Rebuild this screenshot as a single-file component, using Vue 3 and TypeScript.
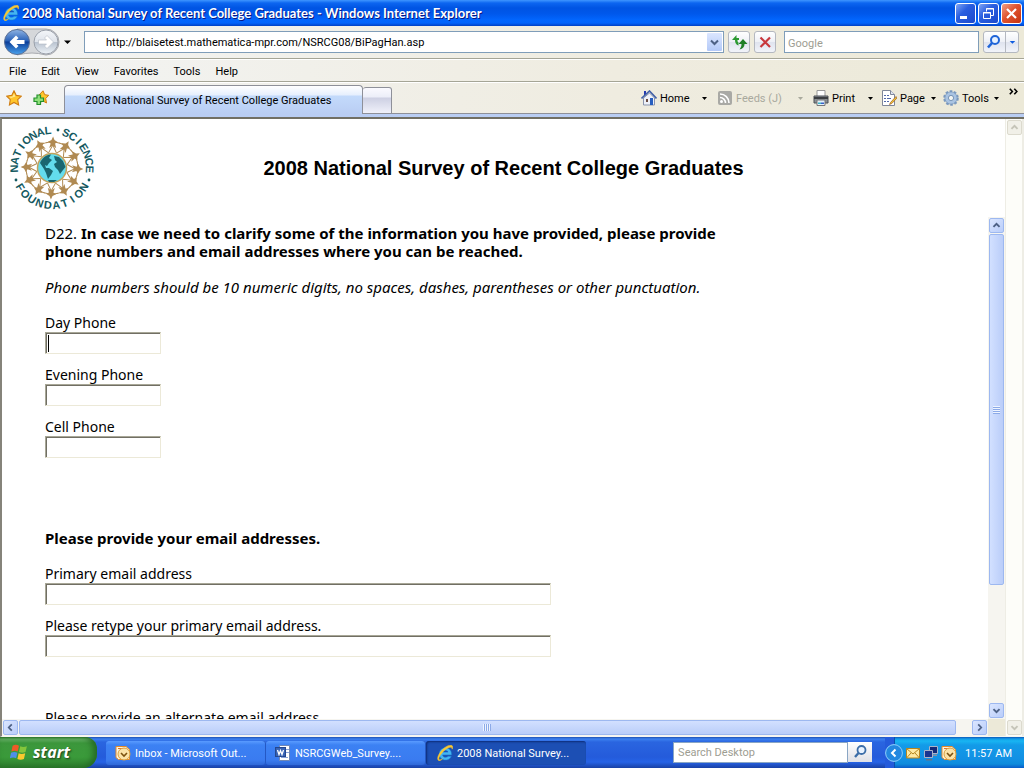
<script setup lang="ts">
import { ref } from 'vue'

const pageTitle = '2008 National Survey of Recent College Graduates'
const url = ref('http://blaisetest.mathematica-mpr.com/NSRCG08/BiPagHan.asp')
const search = ref('')
const desktopSearch = ref('')

const menus = ['File', 'Edit', 'View', 'Favorites', 'Tools', 'Help']

interface Command { id: string; label: string; disabled?: boolean }
const commands: Command[] = [
  { id: 'home', label: 'Home' },
  { id: 'feeds', label: 'Feeds (J)', disabled: true },
  { id: 'print', label: 'Print' },
  { id: 'page', label: 'Page' },
  { id: 'tools', label: 'Tools' },
]

interface Field { id: string; label: string; value: string }
const phones = ref<Field[]>([
  { id: 'day', label: 'Day Phone', value: '' },
  { id: 'evening', label: 'Evening Phone', value: '' },
  { id: 'cell', label: 'Cell Phone', value: '' },
])
const emails = ref<Field[]>([
  { id: 'primary', label: 'Primary email address', value: '' },
  { id: 'retype', label: 'Please retype your primary email address.', value: '' },
])

const tasks = [
  { id: 'outlook', label: 'Inbox - Microsoft Out...' },
  { id: 'word', label: 'NSRCGWeb_Survey....' },
  { id: 'ie', label: '2008 National Survey...' },
]

// Seal lettering: each letter sits on a ring at its own angle (degrees from the top).
interface Glyph { ch: string; angle: number }
function spread(word: string, from: number, to: number): Glyph[] {
  const step = (to - from) / (word.length - 1)
  return word.split('').map((ch, i) => ({ ch, angle: from + i * step }))
}
const upper: Glyph[] = [...spread('NATIONAL', -91, -6), ...spread('SCIENCE', 22, 92)]
const lower: Glyph[] = spread('FOUNDATION', 59, -59)
const figures = Array.from({ length: 12 }, (_, i) => i * 30 + 2)
</script>

<template>
  <div class="desktop">
    <header class="titlebar">
      <svg class="ico" viewBox="0 0 16 16"><use href="#ie-logo" /></svg>
      <span class="title">{{ pageTitle }} - Windows Internet Explorer</span>
      <button class="win" aria-label="Minimize"><svg viewBox="0 0 19 19"><rect x="4" y="12" width="7" height="3" fill="#fff" /></svg></button>
      <button class="win" aria-label="Restore"><svg viewBox="0 0 19 19" fill="none" stroke="#fff"><path d="M7.500 7.500V4.500H14.500V11.500H11.500M7 5H15" /><path d="M4.500 8.500H11.500V14.500H4.500ZM4 9H12" /></svg></button>
      <button class="win close" aria-label="Close"><svg viewBox="0 0 19 19"><path d="M5 5L14 14M14 5L5 14" stroke="#fff" stroke-width="2.200" /></svg></button>
    </header>

    <div class="address">
      <div class="nav">
        <svg width="76" height="30" viewBox="0 0 76 30">
          <defs>
            <linearGradient id="back" x1="0" y1="0" x2="0" y2="1"><stop offset="0" stop-color="#8fb4e4" /><stop offset=".45" stop-color="#2a62b8" /><stop offset=".5" stop-color="#0b3d98" /><stop offset="1" stop-color="#4aa3ee" /></linearGradient>
            <linearGradient id="fwd" x1="0" y1="0" x2="0" y2="1"><stop offset="0" stop-color="#f4f6f9" /><stop offset=".48" stop-color="#dfe4eb" /><stop offset=".52" stop-color="#b9c3d0" /><stop offset="1" stop-color="#eef3f8" /></linearGradient>
          </defs>
          <path d="M17 2H46A13 13 0 0 1 46 28Q38 26 32 26T17 28Z" fill="#d5d7da" stroke="#a9abb0" />
          <circle cx="17" cy="15" r="12.500" fill="url(#back)" stroke="#5a6f94" />
          <circle cx="46" cy="15" r="12" fill="url(#fwd)" stroke="#9aa0aa" />
          <path d="M9.500 15L16 8.500L18.500 11L16.500 13H24.500V17H16.500L18.500 19L16 21.500Z" fill="#fff" />
          <path d="M53.500 15L47 8.500L44.500 11L46.500 13H38.500V17H46.500L44.500 19L47 21.500Z" fill="#fff" stroke="#b4bbc5" stroke-width=".6" />
          <path d="M64 13.500H71L67.500 17Z" fill="#000" />
        </svg>
        <button class="hit" aria-label="Back"></button>
        <button class="hit" aria-label="Forward"></button>
      </div>
      <div class="urlbox">
        <input v-model="url" aria-label="Address" />
        <button class="drop" aria-label="Address history"><svg viewBox="0 0 15 17"><path d="M4 6.500L7.500 10L11 6.500" fill="none" stroke="#4d6185" stroke-width="2" /></svg></button>
      </div>
      <button class="square" aria-label="Refresh"><svg viewBox="0 0 20 20"><path d="M7.500 3L3 8H6C6 11 7 12.500 9.500 13.500V10.500C8.500 10 8.500 9 8.500 8H10V6H7.500Z" fill="#2c9a32" /><path d="M14 7L9.500 12H12.500C12.500 14 12 15.500 10.500 17.500C14 16.500 15.500 15 15.500 12H18.500Z" fill="#1f7f27" /></svg></button>
      <button class="square" aria-label="Stop"><svg viewBox="0 0 20 20"><path d="M5.500 5.500L15 15M15 5.500L5.500 15" stroke="#c8373c" stroke-width="2.200" /></svg></button>
      <input v-model="search" class="google" placeholder="Google" aria-label="Search the web" />
      <div class="searchbtns">
        <button aria-label="Search"><svg viewBox="0 0 20 20"><circle cx="11" cy="8" r="4" fill="#e8f2ff" stroke="#2065d8" stroke-width="2" /><path d="M8 11L4 15.500" stroke="#2065d8" stroke-width="2.600" /></svg></button>
        <button class="narrow" aria-label="Search options"><svg viewBox="0 0 13 20"><path d="M4 9H10L7 12Z" fill="#0d5be0" /></svg></button>
      </div>
    </div>

    <nav class="menubar">
      <button v-for="m in menus" :key="m">{{ m }}</button>
    </nav>

    <div class="tabs">
      <div class="favs">
        <button aria-label="Favorites Center"><svg class="ico" viewBox="0 0 16 16"><path d="M8 .8L10.300 5.400L15.400 6.100L11.700 9.700L12.600 14.900L8 12.400L3.400 14.900L4.300 9.700L.6 6.100L5.700 5.400Z" fill="#ffc62b" stroke="#cf7c12" stroke-width="1.100" /><path d="M8 3.500L9.400 6.600L5 8L3 6.800L6.600 6.500Z" fill="#ffe995" /></svg></button>
        <button aria-label="Add to Favorites"><svg class="ico" viewBox="0 0 16 16"><path d="M10 .8L11.700 4.700L15.700 5.300L12.700 8.500L13.500 13L10 11L6 13L6 5Z" fill="#ffc62b" stroke="#cf7c12" /><path d="M4 5H7.500V8H10.500V11.500H7.500V14.500H4V11.500H1V8H4Z" fill="#8fe07a" stroke="#23902c" stroke-width="1.200" /></svg></button>
      </div>
      <button class="tab">{{ pageTitle }}</button>
      <button class="newtab" aria-label="New Tab"></button>
      <div class="commands">
        <button v-for="c in commands" :key="c.id" :class="['cmd-' + c.id]" :disabled="c.disabled">
          <svg v-if="c.id === 'home'" class="ico" viewBox="0 0 16 16"><path d="M3 1H5V4L3 6Z" fill="#2439b0" /><path d="M2.500 8L8.500 3L13.500 8V15H2.500Z" fill="#eef1f8" stroke="#8b95ae" /><path d="M.5 8.500L8.500 1L15.500 8.500" fill="none" stroke="#4362a8" stroke-width="1.600" /><rect x="5" y="9" width="2" height="3" fill="#6a4c40" /><rect x="9" y="8" width="3" height="7" fill="#285fc0" /></svg>
          <svg v-else-if="c.id === 'feeds'" class="ico" viewBox="0 0 16 16"><rect x="1" y="1" width="14" height="14" rx="2" fill="#a9a9a5" /><circle cx="4.500" cy="11.500" r="1.500" fill="#fff" /><path d="M3 7.500A5.500 5.500 0 0 1 8.500 13M3 4A9 9 0 0 1 12 13" fill="none" stroke="#fff" stroke-width="1.600" /></svg>
          <svg v-else-if="c.id === 'print'" class="ico" viewBox="0 0 16 16"><path d="M4 .5H12V7H4Z" fill="#fff" stroke="#999" /><path d="M1 6H15V13H1Z" fill="#8a8f94" stroke="#4d5156" /><path d="M1 7H15V9H1Z" fill="#3b3e42" /><path d="M4 10H12V15.500H4Z" fill="#e6f1fb" stroke="#777" /><path d="M5 12.500H8V14H5Z" fill="#3cb6c8" /><path d="M8 12.500H11V14H8Z" fill="#3a63c8" /></svg>
          <svg v-else-if="c.id === 'page'" class="ico" viewBox="0 0 16 16"><path d="M1.500 .5H9.500L13.500 4.500V15.500H1.500Z" fill="#fff" stroke="#7f8799" /><path d="M9.500 .5V4.500H13.500" fill="#dfe6f3" stroke="#7f8799" /><path d="M3 5.500H5M6 5.500H8M3 8.500H5M6 8.500H10M3 11.500H5M6 11.500H8" stroke="#5269a8" /><path d="M15 6.500L9.500 12.500L8.500 14.500L10.800 13.500L16 8Z" fill="#f2c331" stroke="#9a5d2c" stroke-width=".7" /></svg>
          <svg v-else class="ico" viewBox="0 0 16 16"><circle cx="8" cy="8" r="6.500" fill="none" stroke="#7e9bc0" stroke-width="2.600" stroke-dasharray="2.500 1.584" /><circle cx="8" cy="8" r="4.300" fill="none" stroke="#a9c3e2" stroke-width="3.600" /><circle cx="8" cy="8" r="2.600" fill="#f3f5f2" stroke="#5d7fa9" stroke-width=".8" /><circle cx="8" cy="8" r="6.200" fill="none" stroke="#6f8fb8" stroke-width=".7" /></svg>
          <span>{{ c.label }}</span>
          <svg class="tri" viewBox="0 0 5 3"><path d="M0 0H5L2.500 3Z" fill="currentColor" /></svg>
        </button>
        <button class="more" aria-label="More commands"><svg viewBox="0 0 8 6"><path d="M.7 .5L3 3L.7 5.500M4.700 .5L7 3L4.700 5.500" fill="none" stroke="#000" stroke-width="1.400" /></svg></button>
      </div>
    </div>

    <main class="viewport">
      <div class="document">
        <div class="banner">
          <svg class="seal" viewBox="-45 -45 90 90">
            <g v-for="a in figures" :key="a" :transform="`rotate(${a})`">
              <path d="M0 -31.500L1.500 -28L5 -26L2.200 -24.500L3.500 -20L0 -22.500L-3.500 -20L-2.200 -24.500L-5 -26L-1.500 -28Z" fill="#b08a52" />
              <path d="M-7 -25L0 -26.500L7 -25M-4 -15L0 -23L4 -15" fill="none" stroke="#b08a52" />
            </g>
            <circle r="14.500" fill="#63dced" stroke="#c2a25c" stroke-width="1.500" />
            <path d="M-12 -5C-10 -10 -6 -13 -1 -13.500L-3 -10L0 -8L-3 -5L-5 -2L-7 -3L-6 0L-3 0L1 3L-1 7L-4 11L-6 5L-8 1ZM2 -12L7 -11L11 -7L13.500 -1L11 2L8 6L6 2L3 -1L2 -4L5 -6L3 -8ZM-4 12H5L2 14H-3Z" fill="#1a6670" />
            <text v-for="(g, i) in upper" :key="'u' + i" :transform="`rotate(${g.angle})`" y="-34" class="letter">{{ g.ch }}</text>
            <text v-for="(g, i) in lower" :key="'l' + i" :transform="`rotate(${g.angle})`" y="41" class="letter">{{ g.ch }}</text>
            <circle cx="6" cy="-38" r="1.400" fill="#14595f" /><circle cx="37" cy="12" r="1.400" fill="#14595f" /><circle cx="-36" cy="12" r="1.400" fill="#14595f" />
          </svg>
          <h1>{{ pageTitle }}</h1>
        </div>

        <div class="frame">
          <form class="survey" @submit.prevent>
            <p class="question">D22. <b>In case we need to clarify some of the information you have provided, please provide phone numbers and email addresses where you can be reached.</b></p>
            <p class="hint">Phone numbers should be 10 numeric digits, no spaces, dashes, parentheses or other punctuation.</p>
            <div class="group">
              <div v-for="f in phones" :key="f.id" class="field">
                <label :for="f.id">{{ f.label }}</label>
                <input :id="f.id" v-model="f.value" type="text" :class="{ caret: f.id === 'day' }" />
              </div>
            </div>
            <h2>Please provide your email addresses.</h2>
            <div class="group wide">
              <div v-for="f in emails" :key="f.id" class="field">
                <label :for="f.id">{{ f.label }}</label>
                <input :id="f.id" v-model="f.value" type="text" />
              </div>
            </div>
            <p class="alternate">Please provide an alternate email address.</p>
          </form>
          <div class="vbar">
            <button class="sb" aria-label="Scroll up"><svg viewBox="0 0 15 15"><use href="#up" /></svg></button>
            <div class="vthumb"><i></i></div>
            <button class="sb end" aria-label="Scroll down"><svg viewBox="0 0 15 15"><use href="#down" /></svg></button>
          </div>
          <div class="hbar">
            <button class="sb" aria-label="Scroll left"><svg viewBox="0 0 15 15"><path d="M9 4L5.500 7.500L9 11" fill="none" stroke="#4d6185" stroke-width="2" /></svg></button>
            <div class="hthumb"><i></i></div>
            <button class="sb end" aria-label="Scroll right"><svg viewBox="0 0 15 15"><path d="M6 4L9.500 7.500L6 11" fill="none" stroke="#4d6185" stroke-width="2" /></svg></button>
          </div>
          <div class="corner"></div>
        </div>
      </div>
      <div class="outer">
        <button class="sb off" disabled aria-label="Page up"><svg viewBox="0 0 15 15"><use href="#up" /></svg></button>
        <button class="sb off end" disabled aria-label="Page down"><svg viewBox="0 0 15 15"><use href="#down" /></svg></button>
      </div>
    </main>

    <footer class="taskbar">
      <button class="start">
        <svg viewBox="0 0 18 17"><path d="M2.500 2.500Q5.500 .8 8.500 2.500L7.300 8Q4.500 6.500 1.300 8Z" fill="#ef5a28" /><path d="M9.700 3Q12.500 4.500 16 3L14.700 8.500Q11.500 10 8.500 8.500Z" fill="#84c53c" /><path d="M1 9.200Q4 7.800 7 9.200L5.800 14.500Q3 13 -.2 14.500Z" fill="#4f8fe8" /><path d="M8.200 9.700Q11 11.200 14.400 9.700L13.200 15.200Q10 16.700 7 15.200Z" fill="#fbc92e" /></svg>
        <span>start</span>
      </button>
      <div class="tasks">
        <button v-for="t in tasks" :key="t.id" class="task" :class="{ active: t.id === 'ie' }">
          <svg v-if="t.id === 'outlook'" class="ico" viewBox="0 0 16 16"><use href="#outlook-logo" /></svg>
          <svg v-else-if="t.id === 'word'" class="ico" viewBox="0 0 16 16"><path d="M4.500 .5H14.500V15.500H4.500Z" fill="#fff" stroke="#6f87b5" /><path d="M11 4.500H14M11 7.500H14M6 12.500H13" stroke="#88a3d8" /><rect x=".5" y="2.500" width="10" height="9" fill="#3763b5" stroke="#24478f" /><path d="M2.500 5L4 9.500L5.500 5.500L7 9.500L8.500 5" fill="none" stroke="#fff" stroke-width="1.300" /></svg>
          <svg v-else class="ico" viewBox="0 0 16 16"><use href="#ie-logo" /></svg>
          <span>{{ t.label }}</span>
        </button>
      </div>
      <div class="desksearch">
        <input v-model="desktopSearch" placeholder="Search Desktop" aria-label="Search Desktop" />
        <button aria-label="Search"><svg viewBox="0 0 20 20"><circle cx="11.500" cy="8" r="4" fill="#e8f2ff" stroke="#3c6ea8" stroke-width="1.800" /><path d="M8.500 11L5 15" stroke="#3c6ea8" stroke-width="2.400" /></svg></button>
      </div>
      <div class="tray">
        <button class="chev" aria-label="Show hidden icons"><svg viewBox="0 0 18 18"><circle cx="9" cy="9" r="8.400" fill="#2388e0" stroke="#8fd0fb" stroke-width="1" /><path d="M10.500 5.500L7 9L10.500 12.500" fill="none" stroke="#fff" stroke-width="2" /></svg></button>
        <svg viewBox="0 0 16 16"><path d="M1.500 3.500H14.500V13H1.500Z" fill="#ffe9a0" stroke="#b5851e" /><path d="M1.500 3.500L8 9L14.500 3.500M1.500 13L6 8M14.500 13L10 8" fill="none" stroke="#b5851e" /></svg>
        <svg viewBox="0 0 16 16"><path d="M6.500 1.500H14.500V8.500H6.500Z" fill="#142a78" stroke="#aab3c8" /><path d="M9 9.500H14V11H9Z" fill="#888fa4" /><path d="M1.500 5.500H9.500V12.500H1.500Z" fill="#1a3590" stroke="#aab3c8" /><path d="M3 14H9V15.500H3Z" fill="#6a7084" /></svg>
        <svg viewBox="0 0 16 16"><use href="#outlook-logo" /></svg>
        <time>11:57 AM</time>
      </div>
    </footer>

    <svg class="defs" aria-hidden="true">
      <symbol id="ie-logo" viewBox="0.500 0.500 15 15">
        <path d="M14.200 9.800H5.800C6 12 9 12.800 11 11H14C12 16.300 2.800 16 2.600 9C2.600 1 14.600 .8 14.200 9.800Z" fill="#43b5f3" stroke="#1877c8" stroke-width=".5" />
        <path d="M5.800 7.300C6.200 4.800 10.600 4.800 11 7.300Z" fill="#1353bd" />
        <path d="M2 15C-2 12 9 -1.500 14.500 1C15.500 1.500 15.300 3 14.700 4.400C14.500 1.500 11 2.500 7 6C3.500 9.500 1 13.500 2.800 14.300C3.800 14.600 4.800 14 5.600 13.500C4.500 14.700 3 15.600 2 15Z" fill="#fcc830" stroke="#fcc830" stroke-width=".5" />
      </symbol>
      <symbol id="outlook-logo" viewBox="0 0 16 16">
        <path d="M1 1.500H11L14.500 4.500V14.500H3.500L1 12.500Z" fill="#fff3d8" stroke="#e48b2a" />
        <path d="M3 3.500H10" stroke="#e4742a" />
        <circle cx="9" cy="9" r="6" fill="#fbe3a8" stroke="#d8a040" />
        <path d="M6 8L9 11L12 8" fill="none" stroke="#7c5210" stroke-width="1.600" />
      </symbol>
      <symbol id="up" viewBox="0 0 15 15"><path d="M4 9L7.500 5.500L11 9" fill="none" stroke="currentColor" stroke-width="2.200" /></symbol>
      <symbol id="down" viewBox="0 0 15 15"><path d="M4 6L7.500 9.500L11 6" fill="none" stroke="currentColor" stroke-width="2.200" /></symbol>
    </svg>
  </div>
</template>

<style>
html, body { margin: 0; overflow: hidden; }
</style>

<style scoped>
* { box-sizing: border-box; }
button, input { font: inherit; color: inherit; padding: 0; margin: 0; border: 0; background: none; border-radius: 0; outline: 0; min-width: 0; }
button { display: flex; align-items: center; white-space: nowrap; }
button svg { display: block; flex: none; }
h1, h2, p { margin: 0; font-weight: normal; }
.ico { width: 16px; height: 16px; flex: none; }
.defs { display: none; }

.desktop { height: 100vh; display: flex; flex-direction: column; background: #efeee4; color: #000; font: 11px/14px Roboto, "Noto Sans", sans-serif; overflow: hidden; }

.titlebar { flex: none; height: 26px; display: flex; align-items: center; gap: 2px; padding: 0 2px 0 3px; background: linear-gradient(#3f96ff 0, #0c66f0 3px, #0054e3 8px, #0058ec 14px, #0266fe 20px, #0364fb 23px, #0140c4 26px); color: #fff; }
.title { flex: 1; padding-left: 1px; font: bold 13px/20px Lato, "Open Sans", sans-serif; text-shadow: 1px 1px 0 #0a1883; white-space: nowrap; }
.win { width: 21px; height: 21px; border: 1px solid #fff; border-radius: 3px; background: linear-gradient(135deg, #7fa5f5, #2a5fe0 40%, #1b49cc); }
.win svg { width: 19px; height: 19px; }
.close { background: linear-gradient(135deg, #f0a088, #e0532e 45%, #c5330f); }

.address { flex: none; height: 33px; display: flex; align-items: center; padding: 0 5px 0 0; border-bottom: 1px solid #a5a596; background: linear-gradient(90deg, #f3f4f4, #efece0 60%, #ece9d8); }
.nav { position: relative; width: 84px; height: 30px; flex: none; display: flex; gap: 4px; padding-left: 4px; }
.nav svg { position: absolute; left: 0; top: 0; }
.hit { width: 27px; height: 30px; position: relative; }
.urlbox { flex: 1; display: flex; height: 22px; border: 1px solid #7f9db9; background: #fff; }
.urlbox input { flex: 1; padding: 2px 0 0 21px; }
.drop { width: 15px; height: 18px; margin: 1px; border-radius: 1px; background: linear-gradient(#dbe6ff, #b3c9f8); }
.drop svg { width: 15px; height: 17px; }
.square { width: 22px; height: 22px; margin-left: 4px; border: 1px solid #b4b8c0; border-radius: 3px; background: linear-gradient(#fff, #eef0f6 50%, #dfe3ee 51%, #f2f4fa); }
.square svg { width: 20px; height: 20px; }
.google { flex: 0 0 195px; height: 22px; margin: 0 4px 0 8px; padding: 2px 3px 0; border: 1px solid #7f9db9; background: #fff; }
input::placeholder { color: #9d9d92; opacity: 1; }
.searchbtns { display: flex; height: 22px; border: 1px solid #b4b8c0; border-radius: 3px; background: linear-gradient(#fff, #eef0f6 50%, #dfe3ee 51%, #f2f4fa); }
.searchbtns button { width: 21px; }
.searchbtns svg { height: 20px; width: 20px; }
.searchbtns .narrow { width: 13px; border-left: 1px solid #b4b8c0; }
.searchbtns .narrow svg { width: 12px; }

.menubar { flex: none; height: 23px; display: flex; align-items: center; gap: 15px; padding: 2px 9px 0; border-top: 1px solid #fff; border-bottom: 1px solid #a5a596; background: linear-gradient(90deg, #f3f4f4, #efece0 60%, #ece9d8); }

.tabs { flex: none; height: 35px; display: flex; align-items: flex-end; border-top: 1px solid #fff; border-bottom: 3px solid #b9cdf3; background: linear-gradient(90deg, #f3f4f4, #efece0 60%, #ece9d8); }
.favs { height: 31px; width: 64px; display: flex; align-items: center; gap: 11px; padding: 0 0 0 6px; border-bottom: 1px solid #8e9099; }
.tab { width: 299px; height: 29px; justify-content: center; padding: 2px 10px 0 0; border: 1px solid #8e9099; border-bottom: 0; border-radius: 4px 4px 0 0; background: linear-gradient(#fff, #e6effd 9px, #c3dafb 10px, #b9cdf3); }
.newtab { width: 29px; height: 27px; border: 1px solid #8e9099; border-left: 0; border-radius: 3px 3px 0 0; background: linear-gradient(#fafaff, #eceef8 9px, #cdd0e3 10px, #f0f1fa); }
.commands { flex: 1; height: 31px; display: flex; align-items: center; justify-content: flex-end; border-bottom: 1px solid #8e9099; padding-right: 5px; }
.commands button { width: 68px; height: 28px; gap: 3px; }
.commands span { padding-top: 2px; }
.commands .cmd-home { width: 76px; }
.commands .cmd-feeds { width: 96px; color: #a9a99d; }
.commands .cmd-page { width: 62px; }
.commands .cmd-tools { width: 66px; }
.tri { width: 5px; height: 3px; margin: 0 10px 0 auto; }
.cmd-print .tri { margin-right: 8px; }
.cmd-page .tri { margin-right: 7px; }
.commands .more { width: 10px; align-items: flex-start; padding-top: 4px; }
.more svg { width: 9px; height: 7px; }

.viewport { flex: 1; min-height: 0; display: flex; border: solid #716f64; border-width: 2px 0 1px 2px; background: #fff; border-left-color: #85837a; border-bottom-color: #f6f5f0; }
.document { flex: 1; min-width: 0; display: flex; flex-direction: column; }
.banner { flex: none; height: 98px; display: grid; grid-template: 1fr / 1fr; align-items: center; }
.seal { grid-area: 1 / 1; width: 90px; height: 90px; margin-left: 5px; }
.letter { font: bold 11px "Liberation Sans", sans-serif; fill: #14595f; text-anchor: middle; }
h1 { grid-area: 1 / 1; text-align: center; font: bold 20px/24px "Liberation Sans", Arial, sans-serif; }
.frame { flex: 1; min-height: 0; display: grid; grid-template: minmax(0, 1fr) 17px / minmax(0, 1fr) 17px; }
.survey { overflow: hidden; min-height: 0; padding: 7px 0 0 43px; font: 14px/18px "Noto Sans", "DejaVu Sans Condensed", sans-serif; }
.question { max-width: 690px; font-size: 15px; }
.hint { margin: 18px 0; font-size: 15px; font-style: italic; }
.field { display: flex; flex-direction: column; margin-bottom: 12px; }
.field label { align-self: flex-start; }
.field input { height: 22px; width: 116px; border: 1px solid #a8a797; border-right-color: #ece9d8; border-bottom-color: #ece9d8; box-shadow: inset 1px 1px 0 #716f64; background: #fff; padding: 0 3px; }
.field .caret { background: linear-gradient(#000, #000) 2px 2px / 1px 17px no-repeat; }
.wide input { width: 506px; }
h2 { margin: 71px 0 18px; font-size: 15px; font-weight: bold; line-height: 18px; }
.alternate { margin-top: 52px; }

.vbar { display: flex; flex-direction: column; background: #f6f5f0; padding: 0 1px; }
.hbar { display: flex; background: #f6f5f0; padding: 1px 0; }
.corner { background: #ece9d8; }
.sb { width: 15px; height: 15px; flex: none; margin: 1px 0; border: 1px solid #9db8f0; border-radius: 2px; background: linear-gradient(135deg, #dbe6ff, #b9cdfa); color: #4d6185; }
.sb svg { width: 13px; height: 13px; }
.hbar .sb { margin: 0 1px; }
.vthumb { flex: 0 0 70%; display: flex; align-items: center; justify-content: center; border: 1px solid #9db8f0; border-radius: 2px; background: linear-gradient(90deg, #d2e0ff, #bacdf9); }
.vthumb i { width: 7px; height: 8px; background: repeating-linear-gradient(#eef4ff 0 1px, #8caae8 1px 2px); }
.hthumb { flex: 0 0 95%; display: flex; align-items: center; justify-content: center; border: 1px solid #9db8f0; border-radius: 2px; background: linear-gradient(#d2e0ff, #bacdf9); }
.hthumb i { width: 8px; height: 7px; background: repeating-linear-gradient(90deg, #eef4ff 0 1px, #8caae8 1px 2px); }
.vbar .end { margin-top: auto; }
.hbar .end { margin-left: auto; }
.outer { width: 19px; flex: none; display: flex; flex-direction: column; justify-content: space-between; align-items: flex-start; padding: 0 0 0 1px; background: #fdfdf9; border-right: 2px solid #eeede5; border-left: 1px solid #eeede5; }
.off { border-color: #dcdace; background: #f1f0e8; color: #c5c4b8; }

.taskbar { flex: none; height: 31px; display: flex; align-items: stretch; background: linear-gradient(#1f4fb0 0, #3c81f0 2px, #2a65e0 5px, #245bdb 20px, #2663e6 25px, #1941a5 31px); color: #fff; }
.start { width: 97px; gap: 4px; padding: 0 0 2px 10px; border-radius: 0 12px 14px 0; background: linear-gradient(#2c7a2c 0, #6cb86c 2px, #3c973c 6px, #3a9a3a 20px, #2b7a2b 31px); box-shadow: inset -4px 0 6px #256a25; font: italic bold 16px/22px "Open Sans", sans-serif; text-shadow: 1px 1px 2px #1b3b1b; }
.start svg { width: 19px; height: 18px; }
.tasks { display: flex; flex: 1; padding: 4px 0 3px 9px; }
.task { flex: 0 1 160px; gap: 4px; padding-left: 9px; border-radius: 3px; background: linear-gradient(#5a9bff, #3c81f3 4px, #3a7bf0 19px, #2f69d8); box-shadow: inset -1px 0 0 #2458c4; }
.task span, time { padding-top: 2px; }
.active { padding-left: 11px; background: #1c4fb4; box-shadow: inset 1px 1px 2px #0d2c76; }
.desksearch { display: flex; align-items: center; height: 22px; margin: 4px 13px 0 0; }
.desksearch input { width: 175px; height: 21px; padding: 0 4px; border: 1px solid #8aa6c4; background: #fff; color: #000; }
.desksearch button { width: 24px; height: 20px; padding: 0 2px; background: linear-gradient(#fff, #dfe0e6); }
.desksearch svg { width: 20px; height: 20px; }
.tray { flex: none; display: flex; align-items: center; gap: 2px; padding: 0 12px 0 0; background: linear-gradient(90deg, #245bdb 9px, #0b4fae 9px 10px, transparent 10px), linear-gradient(#0c59b9 0, #139ee9 2px, #18b5f2 4px, #139be8 8px, #1290e4 22px, #0d8bdc 27px, #095bc9 31px); }
.tray svg { width: 16px; height: 16px; }
.tray .chev svg { width: 18px; height: 18px; }
time { margin-left: 6px; }
</style>
